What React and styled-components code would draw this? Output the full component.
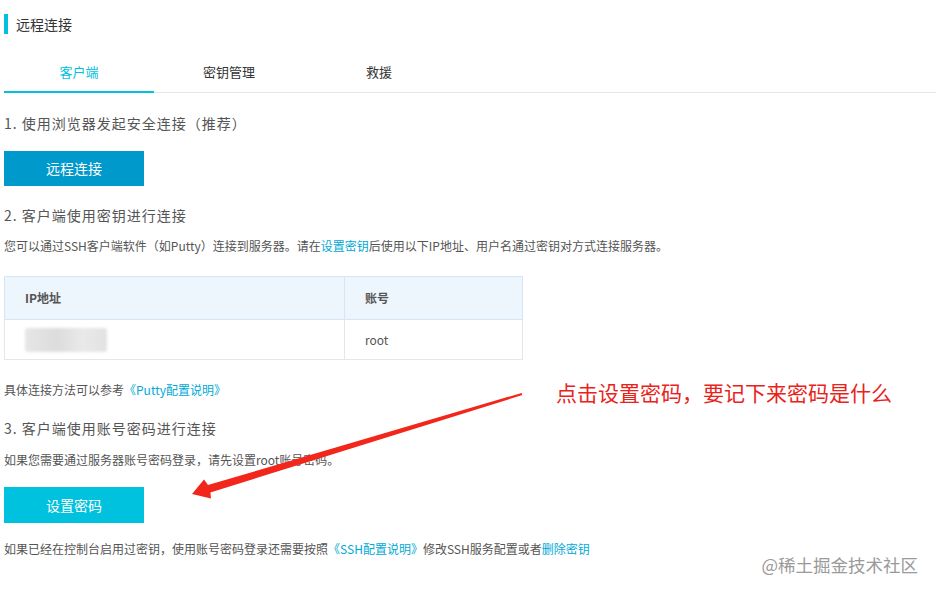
import React from 'react'
import styled, { createGlobalStyle } from 'styled-components'

const GlobalStyle = createGlobalStyle`
  body {
    margin: 0;
    background: #fff;
    font-family: "Noto Sans CJK SC", "Noto Sans", sans-serif;
    color: #555;
  }
`

const Page = styled.div`
  position: relative;
  width: 936px;
  height: 594px;
  overflow: hidden;
  padding-left: 4px;
  box-sizing: border-box;
`

const Title = styled.div`
  margin-top: 14px;
  height: 20px;
  line-height: 20px;
  border-left: 4px solid #00c1de;
  padding-left: 8px;
  font-size: 14px;
  color: #333;
`

const Tabs = styled.div`
  display: flex;
  margin-top: 18px;
  border-bottom: 1px solid #e6e6e6;
`

const Tab = styled.div`
  width: 150px;
  height: 39px;
  line-height: 40px;
  text-align: center;
  font-size: 13px;
  color: ${p => (p.active ? '#00c1de' : '#333')};
  border-bottom: 2px solid ${p => (p.active ? '#00c1de' : 'transparent')};
  margin-bottom: -1px;
`

const Heading = styled.div`
  margin-top: ${p => p.top}px;
  height: 20px;
  line-height: 20px;
  font-size: 14px;
  color: #555;
  letter-spacing: 1px;
`

const Text = styled.div`
  margin-top: ${p => p.top}px;
  height: 18px;
  line-height: 18px;
  font-size: 12px;
  color: #555;
`

const Link = styled.span`
  color: #00a9d6;
`

const Button = styled.div`
  margin-top: ${p => p.top}px;
  width: 140px;
  height: ${p => p.h}px;
  line-height: ${p => p.h}px;
  text-align: center;
  background: ${p => p.color};
  color: #fff;
  font-size: 14px;
`

const Table = styled.div`
  margin-top: 21px;
  width: 519px;
  display: grid;
  grid-template-columns: 340px 179px;
  font-size: 12px;
  color: #555;
`

const HeadCell = styled.div`
  height: 42px;
  line-height: 42px;
  padding-left: 20px;
  background: #eef6fd;
  border-top: 1px solid #d5e7f6;
  border-bottom: 1px solid #d5e7f6;
  border-left: 1px solid #d5e7f6;
  border-right: ${p => (p.last ? '1px solid #d5e7f6' : 'none')};
  font-weight: bold;
`

const Cell = styled.div`
  height: 39px;
  line-height: 39px;
  padding-left: 20px;
  border-bottom: 1px solid #e6e6e6;
  border-left: 1px solid #e6e6e6;
  border-right: ${p => (p.last ? '1px solid #e6e6e6' : 'none')};
  display: flex;
  align-items: center;
`

const Masked = styled.span`
  display: block;
  width: 82px;
  height: 24px;
  background: linear-gradient(90deg, #e6e6e6, #dcdcdc 40%, #e9e9e9 70%, #e2e2e2);
  filter: blur(1.5px);
  border-radius: 3px;
`

const Note = styled.div`
  position: absolute;
  left: 556px;
  top: 380px;
  font-size: 21px;
  line-height: 24px;
  color: #e8231b;
  white-space: nowrap;
`

const Arrow = styled.svg`
  position: absolute;
  left: 0;
  top: 0;
  pointer-events: none;
`

const Watermark = styled.div`
  position: absolute;
  right: 18px;
  top: 554px;
  font-size: 17.5px;
  line-height: 22px;
  color: #9a9a9a;
  text-shadow: 0 0 1px #fff;
  white-space: nowrap;
`

const App = () => (
  <Page>
    <GlobalStyle />
    <Title>远程连接</Title>
    <Tabs>
      <Tab active>客户端</Tab>
      <Tab>密钥管理</Tab>
      <Tab>救援</Tab>
    </Tabs>

    <Heading top={20}>1. 使用浏览器发起安全连接（推荐）</Heading>
    <Button top={18} h={35} color="#0099cc">远程连接</Button>

    <Heading top={19}>2. 客户端使用密钥进行连接</Heading>
    <Text top={12}>
      您可以通过SSH客户端软件（如Putty）连接到服务器。请在<Link>设置密钥</Link>后使用以下IP地址、用户名通过密钥对方式连接服务器。
    </Text>
    <Table>
      <HeadCell>IP地址</HeadCell>
      <HeadCell last>账号</HeadCell>
      <Cell><Masked /></Cell>
      <Cell last>root</Cell>
    </Table>
    <Text top={21}>
      具体连接方法可以参考<Link>《Putty配置说明》</Link>
    </Text>

    <Heading top={19}>3. 客户端使用账号密码进行连接</Heading>
    <Text top={13}>如果您需要通过服务器账号密码登录，请先设置root账号密码。</Text>
    <Button top={18} h={36} color="#00c1de">设置密码</Button>
    <Text top={17}>
      如果已经在控制台启用过密钥，使用账号密码登录还需要按照<Link>《SSH配置说明》</Link>修改SSH服务配置或者<Link>删除密钥</Link>
    </Text>

    <Note>点击设置密码，要记下来密码是什么</Note>
    <Arrow width="936" height="594" viewBox="0 0 936 594">
      <polygon
        points="521.7,392.9 208,485 204,479.5 192,494 211,498.5 210.4,492.4 522.3,395.1"
        fill="#f2261b"
      />
    </Arrow>
    <Watermark>@稀土掘金技术社区</Watermark>
  </Page>
)

export default App
